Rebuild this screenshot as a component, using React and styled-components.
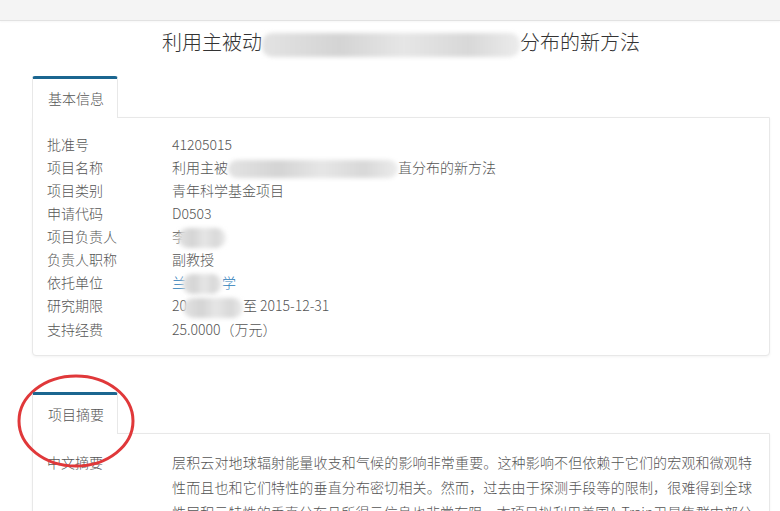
import React from 'react';
import styled, { createGlobalStyle } from 'styled-components';

const GlobalStyle = createGlobalStyle`
  html, body {
    margin: 0;
    padding: 0;
    background: #fff;
    font-family: "Noto Sans CJK SC", "Noto Sans", sans-serif;
    overflow: hidden;
  }
`;

const TopBar = styled.div`
  height: 20px;
  background: #f4f4f4;
  border-bottom: 1px solid #e2e2e2;
  box-shadow: 0 1px 2px rgba(0, 0, 0, 0.04);
`;

const Page = styled.div`
  margin: 0 10px 0 32px;
`;

const Title = styled.h1`
  margin: 0 0 19px;
  padding-top: 6px;
  font-size: 20px;
  line-height: 30px;
  font-weight: 300;
  color: #333;
  text-align: center;
  white-space: nowrap;
`;

const Section = styled.section`
  position: relative;
  margin-bottom: 36px;
`;

const TabBar = styled.div`
  display: flex;
`;

const Tab = styled.div`
  width: 86px;
  box-sizing: border-box;
  height: 42px;
  padding-left: 15px;
  border-top: 3px solid #1b6690;
  border-left: 1px solid #e8e8e8;
  border-right: 1px solid #e8e8e8;
  border-radius: 3px 3px 0 0;
  background: #fff;
  font-size: 14px;
  font-weight: 300;
  line-height: 38px;
  color: #555;
  margin-bottom: -1px;
  position: relative;
  z-index: 1;
`;

const Panel = styled.div`
  border: 1px solid #e8e8e8;
  border-radius: 0 0 4px 4px;
  box-shadow: 0 1px 3px rgba(0, 0, 0, 0.05);
  padding: ${(p) => p.$pad || '15px 17px 14px 14px'};
  background: #fff;
`;

const Row = styled.div`
  display: grid;
  grid-template-columns: 125px 1fr;
  font-size: 14px;
  font-weight: 300;
  line-height: ${(p) => p.$lh || '23px'};
  color: #555;
`;

const Label = styled.div`
  white-space: nowrap;
`;

const Value = styled.div`
  color: ${(p) => (p.$link ? '#2a7ab8' : '#555')};
  text-align: ${(p) => (p.$justify ? 'justify' : 'left')};
`;

const Blur = styled.span`
  display: inline-block;
  vertical-align: middle;
  width: ${(p) => p.$w}px;
  height: ${(p) => p.$h || 20}px;
  margin-left: ${(p) => p.$ml || 0}px;
  border-radius: 10px;
  background: linear-gradient(90deg, #e3e3e3, #d4d4d4 30%, #e6e6e6 55%, #d8d8d8 80%, #ececec);
  filter: blur(2px);
`;

const Annotation = styled.svg`
  position: absolute;
  left: -16px;
  top: -19px;
  pointer-events: none;
`;

const rows = [
  ['批准号', '41205015'],
  ['项目名称', <>利用主被<Blur $w={170} $h={18} />直分布的新方法</>],
  ['项目类别', '青年科学基金项目'],
  ['申请代码', 'D0503'],
  ['项目负责人', <>李<Blur $w={48} $ml={-8} /></>],
  ['负责人职称', '副教授'],
  ['依托单位', <>兰<Blur $w={40} $ml={-4} />学</>, true],
  ['研究期限', <>20<Blur $w={60} $ml={-4} />至 2015-12-31</>],
  ['支持经费', '25.0000（万元）'],
];

export default function App() {
  return (
    <>
      <GlobalStyle />
      <TopBar />
      <Page>
        <Title>
          利用主被动<Blur $w={258} $h={24} />分布的新方法
        </Title>

        <Section>
          <TabBar>
            <Tab>基本信息</Tab>
          </TabBar>
          <Panel>
            {rows.map(([label, value, link]) => (
              <Row key={label}>
                <Label>{label}</Label>
                <Value $link={link}>{value}</Value>
              </Row>
            ))}
          </Panel>
        </Section>

        <Section>
          <TabBar>
            <Tab>项目摘要</Tab>
          </TabBar>
          <Panel $pad="16px 17px 15px 14px">
            <Row $lh="25px">
              <Label>中文摘要</Label>
              <Value $justify>
                层积云对地球辐射能量收支和气候的影响非常重要。这种影响不但依赖于它们的宏观和微观特性而且也和它们特性的垂直分布密切相关。然而，过去由于探测手段等的限制，很难得到全球性层积云特性的垂直分布且所得云信息也非常有限。本项目拟利用美国A-Train卫星集群中部分卫星的主被动遥感资料，发展一种反演层积云特性垂直分布的新方法。
              </Value>
            </Row>
          </Panel>
          <Annotation width="120" height="96" viewBox="0 0 120 96">
            <ellipse cx="60" cy="48" rx="57" ry="45" fill="none" stroke="#e0383a" strokeWidth="3" />
          </Annotation>
        </Section>
      </Page>
    </>
  );
}
